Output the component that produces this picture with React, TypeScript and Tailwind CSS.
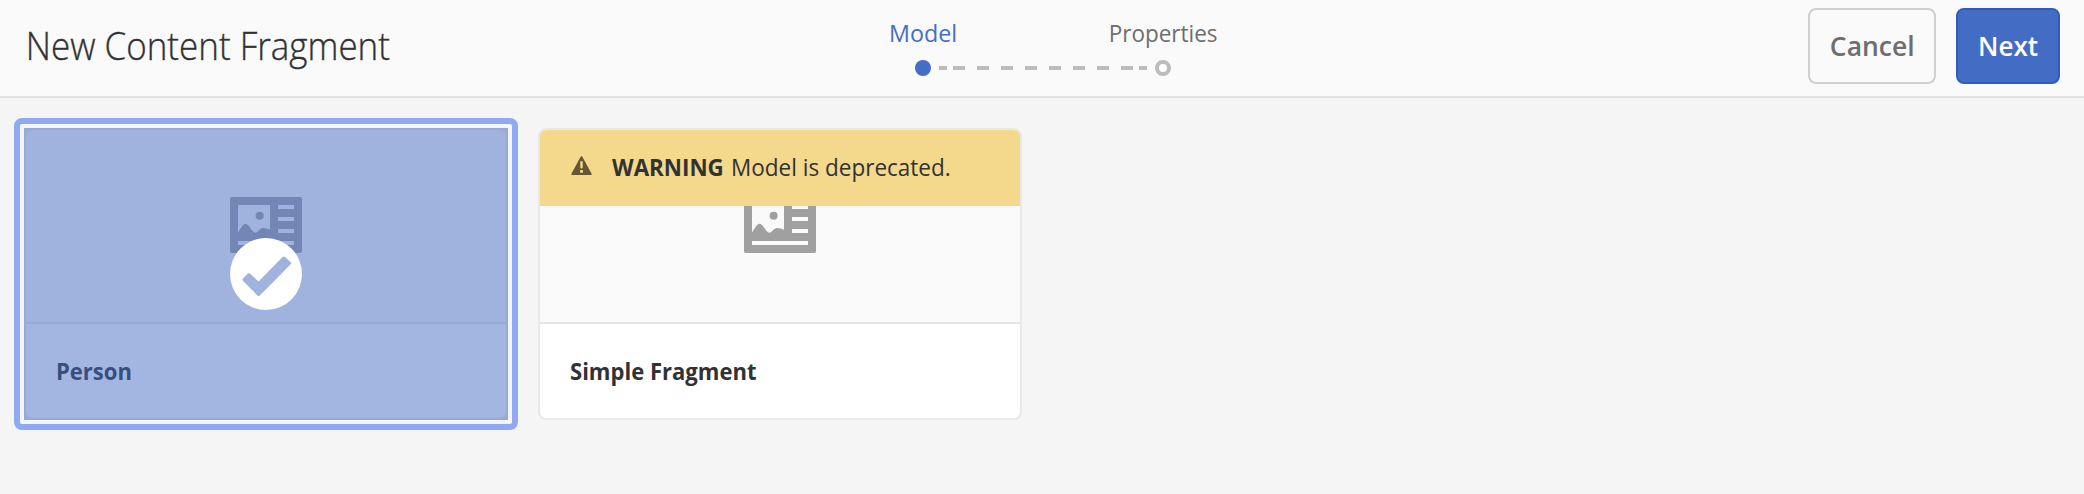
import type { ReactNode } from "react";

function FragmentIcon({ className }: { className: string }) {
  return (
    <svg viewBox="0 0 36 28" className={`h-14 w-[72px] ${className}`} fill="currentColor" aria-hidden="true">
      <path
        fillRule="evenodd"
        d="M1 0H35A1 1 0 0 1 36 1V27A1 1 0 0 1 35 28H1A1 1 0 0 1 0 27V1A1 1 0 0 1 1 0ZM4 4V17.8C5.4 15.6 6.6 13.4 7.8 13.4C9.5 13.4 11 17.9 12.7 17.9C14 17.9 14.8 15.5 16.6 15.5C17.8 15.5 19 16 20 16.4V4ZM24 4V6H32V4ZM24 10V12H32V10ZM24 16V18H32V16ZM4 22V24H32V22Z"
      />
      <circle cx="14.8" cy="9.4" r="2" />
    </svg>
  );
}

function CheckBadge() {
  return (
    <svg viewBox="0 0 72 72" className="size-[72px]" aria-hidden="true">
      <circle cx="36" cy="36" r="36" fill="#fff" />
      <path
        d="M12.8 40.8L17.7 35.8Q18.9 34.8 20.1 35.8L28.6 43.4L52.6 19Q53.9 17.9 55.1 19L60.7 24.3Q61.6 25.3 60.7 26.3L29.6 57.7Q28.6 58.6 27.6 57.7L12.8 42.8Q11.9 41.8 12.8 40.8Z"
        fill="#a0b2de"
      />
    </svg>
  );
}

function WarningIcon() {
  return (
    <svg viewBox="0 0 21 19" className="h-[19px] w-[21px]" aria-hidden="true">
      <path
        fill="#655734"
        fillRule="evenodd"
        d="M9.8 .5Q10.5 -.4 11.2 .5L20.6 17.8Q21 18.9 19.9 19H1.1Q0 18.9 .4 17.8ZM9.3 5.2V11.4Q9.3 12.4 10.5 12.4Q11.7 12.4 11.7 11.4V5.2ZM9.1 14V16.7H11.9V14Z"
      />
    </svg>
  );
}

function Step({ label, active, scale }: { label: string; active?: boolean; scale: string }) {
  return (
    <div className="flex w-60 flex-col items-center">
      <span
        className={`text-[24px] leading-[32px] font-[460] ${scale} ${active ? "text-[#446ec6]" : "text-[#6e6e6e]"}`}
      >
        {label}
      </span>
    </div>
  );
}

function Stepper() {
  return (
    <div className="flex flex-col pt-[17px]">
      <div className="flex">
        <Step label="Model" active scale="scale-x-[0.97]" />
        <Step label="Properties" scale="scale-x-[0.937]" />
      </div>
      <div className="flex items-center px-28 pt-[11px]">
        <span className="size-4 rounded-full bg-[#446ec6]" />
        <span className="ml-2 h-1 w-2 bg-[#bcbcbc]" />
        <span className="ml-1.5 flex gap-3">
          {Array.from({ length: 8 }, (_, i) => (
            <span key={i} className="h-1 w-3 bg-[#bcbcbc]" />
          ))}
        </span>
        <span className="ml-1.5 h-1 w-2 bg-[#bcbcbc]" />
        <span className="ml-2 size-4 rounded-full border-4 border-[#bcbcbc] bg-white" />
      </div>
    </div>
  );
}

function Banner({ children }: { children: ReactNode }) {
  return (
    <div className="absolute inset-x-0 top-0 flex h-[76px] items-start rounded-t-md bg-[#f4d88b] pl-[31px] text-[24px] leading-[36px] text-[#323232]">
      {children}
    </div>
  );
}

export default function App() {
  return (
    <div className="h-[494px] w-full overflow-hidden bg-[#f5f5f5] font-['Open_Sans','Noto_Sans',sans-serif] whitespace-nowrap">
      <header className="grid h-[98px] grid-cols-[803px_480px_1fr] border-b-2 border-[#e0e0e0] bg-[#fafafa]">
        <h1 className="origin-left scale-x-[0.92] pl-[28px] text-[38px] leading-[91px] font-light text-[#323232] [-webkit-text-stroke:0.35px_#323232]">
          New Content Fragment
        </h1>
        <Stepper />
        <div className="flex justify-end gap-5 pt-2 pr-6 text-[27px] leading-[70px] font-[650]">
          <button className="h-[76px] w-32 rounded-lg border-2 border-[#d0d0d0] text-[#6e6e6e]">
            <span className="inline-block scale-x-[0.98]">Cancel</span>
          </button>
          <button className="h-[76px] w-[104px] rounded-lg border-2 border-[#2f5cba] bg-[#436dc5] text-white">
            <span className="inline-block scale-x-[0.965]">Next</span>
          </button>
        </div>
      </header>

      <main className="flex gap-5 pt-5 pl-3.5">
        <div className="h-[312px] w-[504px] rounded-lg border-[6px] border-[#8faaf2] p-1">
          <article className="h-full bg-[#96aad6] p-0.5">
            <div className="flex h-[192px] flex-col items-center rounded-t-md bg-[#a0b2de] pt-[67px]">
              <FragmentIcon className="text-[#7287b5]" />
              <span className="relative -mt-[15px]">
                <CheckBadge />
              </span>
            </div>
            <div className="mt-0.5 flex h-[94px] items-start rounded-b-md bg-[#a3b6e1] pt-[25px] pl-[29.5px] text-[24px] leading-[44px] font-[670] text-[#364f7e]">
              <span className="origin-left scale-x-[0.918]">Person</span>
            </div>
          </article>
        </div>

        <article className="relative mt-2.5 flex h-[292px] w-[484px] flex-col rounded-lg border-2 border-[#e8e8e8] bg-white">
          <div className="flex h-[194px] justify-center rounded-t-md border-b-2 border-[#e5e5e5] bg-[#fafafa] pt-[67px]">
            <FragmentIcon className="text-[#a0a0a0]" />
          </div>
          <div className="flex flex-1 items-start pt-[25px] pl-[29.5px] text-[24px] leading-[44px] font-[670] text-[#323232]">
            <span className="origin-left scale-x-[0.918]">Simple Fragment</span>
          </div>
          <Banner>
            <span className="pt-[26px]">
              <WarningIcon />
            </span>
            <strong className="ml-5 w-[119px] origin-left scale-x-[0.932] pt-[19px] font-bold">WARNING</strong>
            <span className="origin-left scale-x-[0.938] pt-[19px] font-[430]">Model is deprecated.</span>
          </Banner>
        </article>
      </main>
    </div>
  );
}
